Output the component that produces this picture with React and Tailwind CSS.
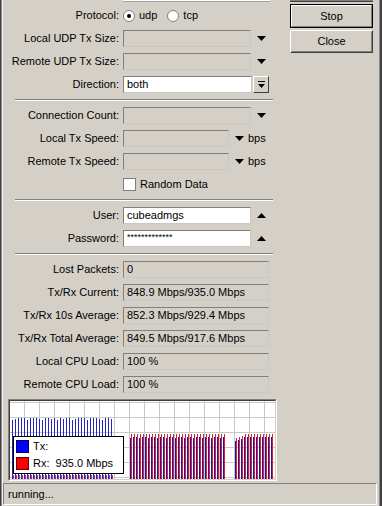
import React from 'react'

const Down = () => (
  <svg width="9" height="5" viewBox="0 0 9 5"><polygon points="0,0 9,0 4.5,5" fill="#000" /></svg>
)
const Up = () => (
  <svg width="9" height="5" viewBox="0 0 9 5"><polygon points="0,5 9,5 4.5,0" fill="#000" /></svg>
)

function Label({ children }) {
  return <div className="w-[120px] shrink-0 text-right pr-[4px] whitespace-nowrap">{children}</div>
}

function Field({ w, white, children }) {
  return (
    <div
      className={`h-[17px] shrink-0 border-t border-l border-[#808080] border-b border-r border-b-[#c8c8c8] border-r-[#c8c8c8] flex items-center pl-[3px] whitespace-nowrap ${white ? 'bg-white' : 'bg-[#d4d0c8]'}`}
      style={{ width: w }}
    >
      {children}
    </div>
  )
}

function Row({ label, children }) {
  return (
    <div className="flex items-center h-[17px]">
      <Label>{label}</Label>
      {children}
    </div>
  )
}

const Sep = () => <div className="ml-[12px] w-[258px] h-[2px] border-t border-[#808080] border-b border-b-white" />

function Graph() {
  const bars = []
  // segment 1: mostly tx
  for (let x = 2, i = 0; x <= 103; x += 3, i++) {
    const t = 17 + ((i * 7) % 5 === 0 ? 2 : (i % 4 === 1 ? 1 : 0))
    bars.push(<rect key={'a' + x} x={x} y={t} width="1" height={78 - t} fill="#2424c0" />)
    bars.push(<rect key={'ar' + x} x={x + 1} y={74} width="1" height={4} fill="#c03070" />)
  }
  for (let x = 120, i = 0; x <= 214; x += 3, i++) {
    const bt = 36 + (i % 3 === 0 ? 1 : 0)
    bars.push(<rect key={'b' + x} x={x} y={bt} width="1" height={78 - bt} fill="#2c1490" />)
    bars.push(<rect key={'br' + x} x={x + 1} y={33} width="1" height={45} fill="#d8203c" />)
  }
  for (let x = 225, i = 0; x <= 261; x += 3, i++) {
    const rt = i < 3 ? 37 - i : 33
    bars.push(<rect key={'c' + x} x={x} y={rt + 3} width="1" height={78 - rt - 3} fill="#2c1490" />)
    bars.push(<rect key={'cr' + x} x={x + 1} y={rt} width="1" height={78 - rt} fill="#d8203c" />)
  }
  const grid = []
  for (let x = 14; x < 265; x += 15) grid.push(<rect key={'gx' + x} x={x} y="0" width="1" height="78" fill="#c8c8c8" />)
  for (let y = 1; y < 78; y += 15) grid.push(<rect key={'gy' + y} x="0" y={y} width="265" height="1" fill="#c8c8c8" />)
  return (
    <div className="ml-[5px] w-[269px] h-[82px] border-t border-l border-[#808080] border-b border-r border-b-white border-r-white">
      <div className="relative w-full h-full border-t border-l border-[#404040] border-b border-r border-b-[#d4d0c8] border-r-[#d4d0c8] bg-white">
        <svg width="265" height="78" className="block">
          {grid}
          {bars}
        </svg>
        <div className="absolute left-[3px] top-[35px] w-[111px] h-[38px] bg-white border border-black flex flex-col justify-center gap-[4px] pl-[2px]">
          <div className="flex items-center gap-[4px] h-[13px]">
            <div className="w-[13px] h-[13px] bg-[#0000ff] border border-[#000060]" />
            <span>Tx:</span>
          </div>
          <div className="flex items-center gap-[4px] h-[13px]">
            <div className="w-[13px] h-[13px] bg-[#ff0000] border border-[#600000]" />
            <span className="whitespace-pre">Rx:  935.0 Mbps</span>
          </div>
        </div>
      </div>
    </div>
  )
}

export default function App() {
  return (
    <div className="w-[382px] h-[506px] bg-[#d4d0c8] text-black text-[11px] leading-none font-['Liberation_Sans',Arial,sans-serif] overflow-hidden flex">
      <div className="w-[1px] bg-[#404040]" />
      <div className="w-[1px] bg-[#8a8a8a]" />
      <div className="w-[1px] bg-[#f4f4f4]" />
      <div className="flex-1 flex flex-col">
        <div className="flex flex-1">
          <div className="w-[277px] flex flex-col">
            <div className="ml-[120px] w-[147px] h-[2px] bg-white border-b border-[#a0a0a0]" />
            <div className="mt-[5px] flex flex-col gap-[6px]">
              <Row label="Protocol:">
                <div className="flex items-center gap-[4px]">
                  <div className="w-[12px] h-[12px] rounded-full bg-white border border-[#808080] flex items-center justify-center">
                    <div className="w-[4px] h-[4px] rounded-full bg-black" />
                  </div>
                  <span>udp</span>
                </div>
                <div className="flex items-center gap-[4px] ml-[10px]">
                  <div className="w-[12px] h-[12px] rounded-full bg-white border border-[#808080]" />
                  <span>tcp</span>
                </div>
              </Row>
              <Row label="Local UDP Tx Size:">
                <Field w={128} />
                <div className="ml-[6px]"><Down /></div>
              </Row>
              <Row label="Remote UDP Tx Size:">
                <Field w={128} />
                <div className="ml-[6px]"><Down /></div>
              </Row>
              <Row label="Direction:">
                <Field w={129} white>both</Field>
                <div className="ml-[1px] w-[16px] h-[17px] border border-t-white border-l-white border-b-[#404040] border-r-[#404040] flex items-center justify-center">
                  <svg width="7" height="7" viewBox="0 0 7 7">
                    <rect x="0" y="0" width="7" height="1" fill="#000" />
                    <polygon points="0,3 7,3 3.5,7" fill="#000" />
                  </svg>
                </div>
              </Row>
              <Sep />
              <Row label="Connection Count:">
                <Field w={128} />
                <div className="ml-[6px]"><Down /></div>
              </Row>
              <Row label="Local Tx Speed:">
                <Field w={106} />
                <div className="ml-[6px]"><Down /></div>
                <span className="ml-[4px]">bps</span>
              </Row>
              <Row label="Remote Tx Speed:">
                <Field w={106} />
                <div className="ml-[6px]"><Down /></div>
                <span className="ml-[4px]">bps</span>
              </Row>
              <Row label="">
                <div className="w-[13px] h-[13px] bg-white border border-[#808080]" />
                <span className="ml-[4px]">Random Data</span>
              </Row>
              <Sep />
              <Row label="User:">
                <Field w={128} white>cubeadmgs</Field>
                <div className="ml-[6px]"><Up /></div>
              </Row>
              <Row label="Password:">
                <Field w={128} white><span className="text-[9px] -mt-[3px]">*************</span></Field>
                <div className="ml-[6px]"><Up /></div>
              </Row>
              <Sep />
              <Row label="Lost Packets:"><Field w={146}>0</Field></Row>
              <Row label="Tx/Rx Current:"><Field w={146}>848.9 Mbps/935.0 Mbps</Field></Row>
              <Row label="Tx/Rx 10s Average:"><Field w={146}>852.3 Mbps/929.4 Mbps</Field></Row>
              <Row label="Tx/Rx Total Average:"><Field w={146}>849.5 Mbps/917.6 Mbps</Field></Row>
              <Row label="Local CPU Load:"><Field w={146}>100 %</Field></Row>
              <Row label="Remote CPU Load:"><Field w={146}>100 %</Field></Row>
              <Graph />
            </div>
          </div>
          <div className="ml-[10px] w-[83px] flex flex-col">
            <div className="h-[2px] bg-[#808080] border-b border-[#404040]" />
            <div className="mt-[2px] h-[24px] border border-black">
              <div className="h-full border border-t-white border-l-white border-b-[#808080] border-r-[#808080] flex items-center justify-center">Stop</div>
            </div>
            <div className="mt-[2px] h-[23px] border border-t-white border-l-white border-b-[#404040] border-r-[#404040]">
              <div className="h-full border border-transparent border-b-[#808080] border-r-[#808080] flex items-center justify-center">Close</div>
            </div>
          </div>
        </div>
        <div className="h-[22px] mb-[1px] mr-[2px] border-t border-l border-[#808080] border-b border-r border-b-white border-r-white flex items-center pl-[4px]">running...</div>
      </div>
      <div className="w-[1px] bg-[#8a8a8a]" />
      <div className="w-[2px] bg-[#404040]" />
    </div>
  )
}
